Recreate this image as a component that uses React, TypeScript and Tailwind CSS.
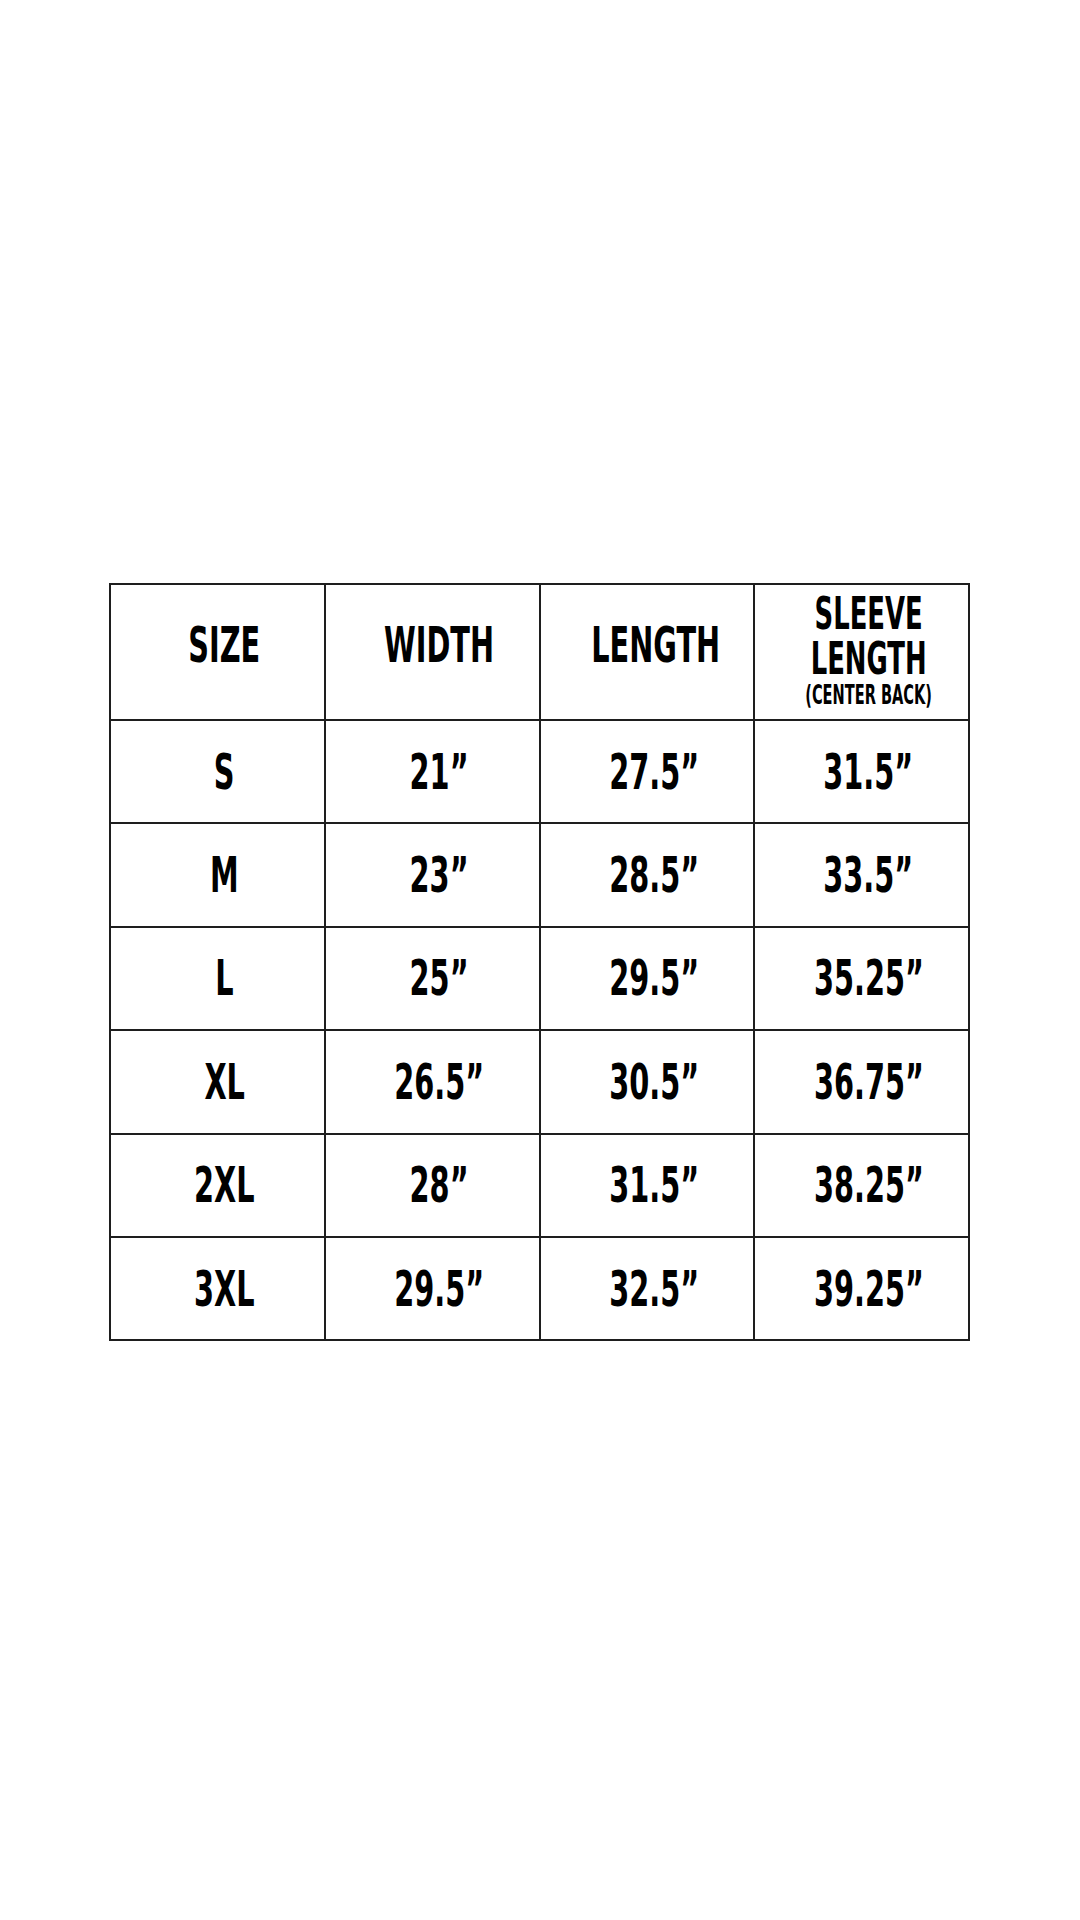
const rows = [
  { size: 'S', width: '21”', length: '27.5”', sleeve: '31.5”' },
  { size: 'M', width: '23”', length: '28.5”', sleeve: '33.5”' },
  { size: 'L', width: '25”', length: '29.5”', sleeve: '35.25”' },
  { size: 'XL', width: '26.5”', length: '30.5”', sleeve: '36.75”' },
  { size: '2XL', width: '28”', length: '31.5”', sleeve: '38.25”' },
  { size: '3XL', width: '29.5”', length: '32.5”', sleeve: '39.25”' },
]

const font = { fontFamily: '"DejaVu Sans Condensed", "Liberation Sans", sans-serif' }

function Cell({ children, head }: { children: React.ReactNode; head?: boolean }) {
  return (
    <td className={`border-2 border-[#1e1e1e] p-0 pl-[14px] text-center align-middle ${head ? 'h-[136px] pb-[14px]' : 'h-[103.4px]'}`}>
      <span className="inline-block origin-center scale-x-[0.64] whitespace-nowrap text-[50px] leading-none font-bold text-black">
        {children}
      </span>
    </td>
  )
}

export default function App() {
  return (
    <div className="min-h-[1920px] w-[1080px] bg-white pt-[583px] pl-[109px]" style={font}>
      <table className="w-[861px] table-fixed border-collapse">
        <thead>
          <tr>
            <Cell head>SIZE</Cell>
            <Cell head>WIDTH</Cell>
            <Cell head>LENGTH</Cell>
            <td className="h-[136px] border-2 border-[#1e1e1e] p-0 pl-[14px] text-center align-top">
              <div className="flex flex-col items-center pt-[6px] font-bold text-black">
                <span className="inline-block scale-x-[0.64] whitespace-nowrap text-[45px] leading-[45px]">SLEEVE</span>
                <span className="inline-block scale-x-[0.64] whitespace-nowrap text-[45px] leading-[45px]">LENGTH</span>
                <span className="inline-block scale-x-[0.6] whitespace-nowrap text-[27px] leading-[28px]">(CENTER BACK)</span>
              </div>
            </td>
          </tr>
        </thead>
        <tbody>
          {rows.map(r => (
            <tr key={r.size}>
              <Cell>{r.size}</Cell>
              <Cell>{r.width}</Cell>
              <Cell>{r.length}</Cell>
              <Cell>{r.sleeve}</Cell>
            </tr>
          ))}
        </tbody>
      </table>
    </div>
  )
}
